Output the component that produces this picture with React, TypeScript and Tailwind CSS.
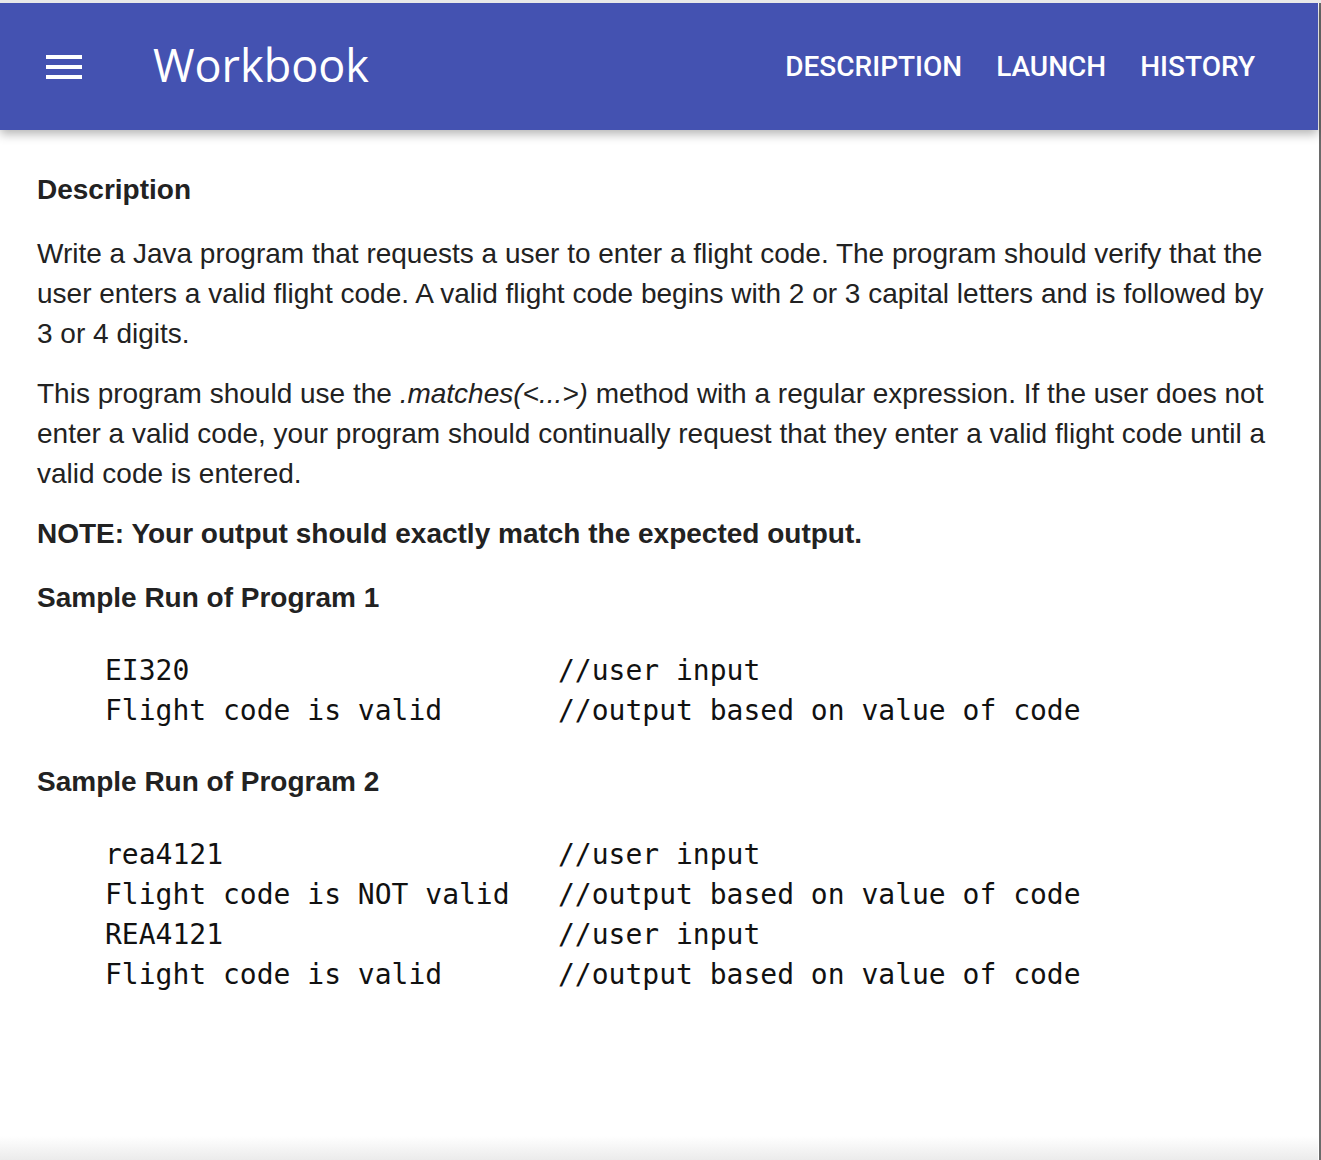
const sampleRuns = [
  {
    id: 1,
    title: "Sample Run of Program 1",
    lines: [
      ["EI320", "//user input"],
      ["Flight code is valid", "//output based on value of code"],
    ],
  },
  {
    id: 2,
    title: "Sample Run of Program 2",
    lines: [
      ["rea4121", "//user input"],
      ["Flight code is NOT valid", "//output based on value of code"],
      ["REA4121", "//user input"],
      ["Flight code is valid", "//output based on value of code"],
    ],
  },
]

const navItems = ["DESCRIPTION", "LAUNCH", "HISTORY"]

function MenuIcon() {
  return (
    <div className="flex flex-col gap-[6px] w-9">
      <span className="block h-1 w-9 bg-white" />
      <span className="block h-1 w-9 bg-white" />
      <span className="block h-1 w-9 bg-white" />
    </div>
  )
}

export default function App() {
  return (
    <div className="w-[1321px] h-[1160px] bg-white flex flex-col overflow-hidden border-t-[3px] border-[#e8e8e8] font-['Liberation_Sans',Arial,sans-serif] text-[#222]">
      <div className="flex flex-1 min-h-0">
        <div className="flex-1 flex flex-col min-w-0">
          <header className="h-[127px] shrink-0 bg-[#4452b1] flex items-center shadow-[0_4px_10px_rgba(0,0,0,0.3)] relative z-10">
            <div className="ml-[46px]">
              <MenuIcon />
            </div>
            <h1 className="ml-[71px] text-white text-[45px] font-['Open_Sans',sans-serif] leading-none pb-1">
              Workbook
            </h1>
            <nav className="ml-auto mr-[63px] flex gap-[34px] font-['Roboto',sans-serif] font-medium text-[28px] text-white">
              {navItems.map(item => (
                <a key={item} href="#" className="leading-none">
                  {item}
                </a>
              ))}
            </nav>
          </header>

          <main className="flex-1 flex flex-col min-h-0">
            <div className="flex-1 pt-[40px] px-[37px] text-[28px] leading-[40px]">
              <h2 className="font-bold mb-6">Description</h2>
              <p className="mb-5">
                Write a Java program that requests a user to enter a flight code. The program should verify that the
                user enters a valid flight code. A valid flight code begins with 2 or 3 capital letters and is followed by
                3 or 4 digits.
              </p>
              <p className="mb-5">
                This program should use the <em>.matches(&lt;...&gt;)</em> method with a regular expression. If the
                user does not enter a valid code, your program should continually request that they enter a valid flight
                code until a valid code is entered.
              </p>
              <p className="font-bold mb-6">NOTE: Your output should exactly match the expected output.</p>

              {sampleRuns.map(run => (
                <section key={run.id} className="mb-[31px]">
                  <h3 className="font-bold mb-[33px]">{run.title}</h3>
                  <div className="ml-[68px] grid grid-cols-[453px_1fr] font-['DejaVu_Sans_Mono',monospace] text-[28px] leading-[40px] text-[#111]">
                    {run.lines.map((line, i) => (
                      <div key={i} className="contents">
                        <span className="whitespace-pre">{line[0]}</span>
                        <span className="whitespace-pre">{line[1]}</span>
                      </div>
                    ))}
                  </div>
                </section>
              ))}
            </div>
            <div className="h-[24px] shrink-0 bg-gradient-to-b from-white to-[#ebebeb]" />
          </main>
        </div>
        <div className="w-px bg-white" />
        <div className="w-[2px] bg-[#6a6a6a]" />
      </div>
    </div>
  )
}
